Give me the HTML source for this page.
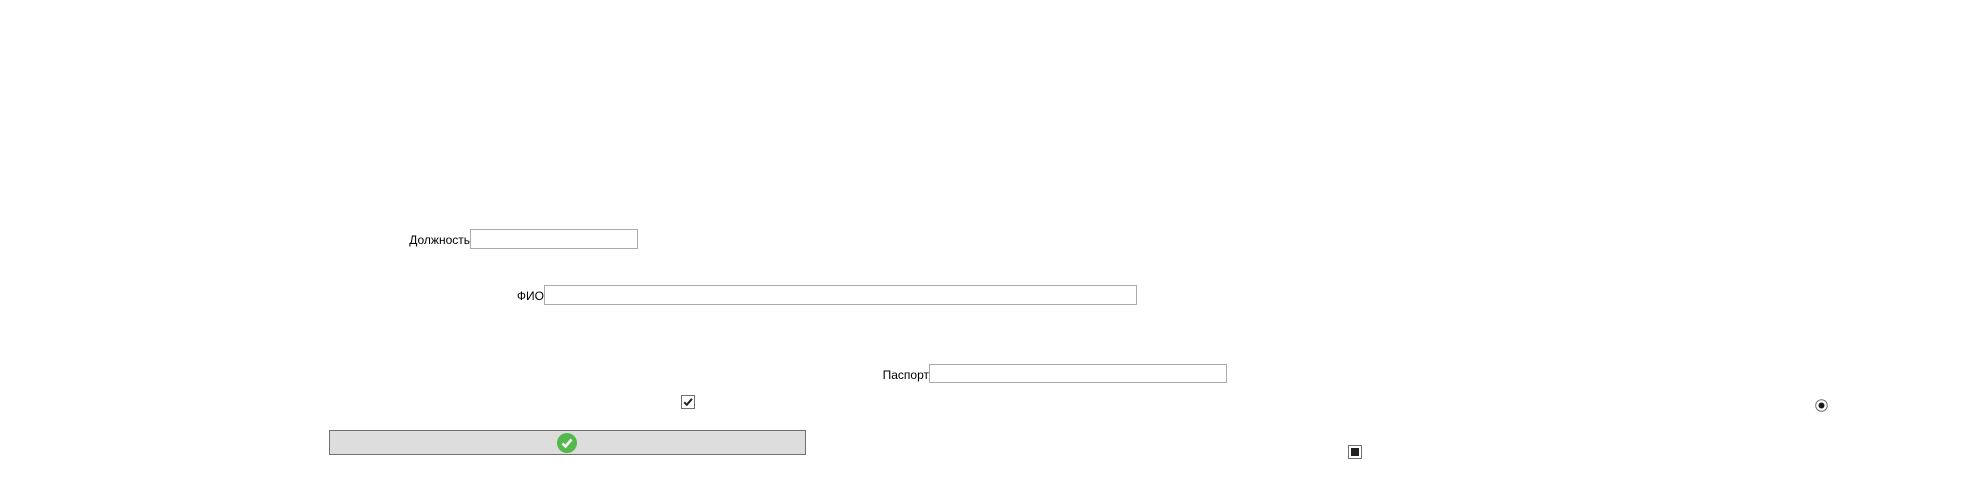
<!DOCTYPE html>
<html><head><meta charset="utf-8"><style>
html,body{margin:0;padding:0;background:#fff;width:1981px;height:491px;overflow:hidden;position:relative;font-family:"Liberation Sans","DejaVu Sans",sans-serif;font-size:12px;color:#000}
.a{position:absolute}
.lbl{position:absolute;text-align:right;line-height:14px;white-space:nowrap}
.inp{position:absolute;box-sizing:border-box;border:1px solid #ababab;background:#fff}
</style></head><body>
<div class="lbl" style="right:1511px;top:233px">Должность</div>
<div class="inp" style="left:470px;top:229px;width:168px;height:20px"></div>
<div class="lbl" style="right:1437px;top:289px">ФИО</div>
<div class="inp" style="left:544px;top:285px;width:593px;height:20px"></div>
<div class="lbl" style="right:1052px;top:368px">Паспорт</div>
<div class="inp" style="left:929px;top:364px;width:298px;height:19px"></div>
<svg class="a" style="left:681px;top:395px" width="14" height="14" viewBox="0 0 14 14">
<rect x="0.5" y="0.5" width="13" height="13" fill="#fff" stroke="#707070"/>
<path d="M3.2 7.2 L5.8 9.8 L11 3.8" fill="none" stroke="#222" stroke-width="2"/>
</svg>
<div class="a" style="left:329px;top:430px;width:477px;height:25px;box-sizing:border-box;border:1px solid #707070;background:#dddddd"></div>
<svg class="a" style="left:557px;top:433px" width="20" height="20" viewBox="0 0 20 20">
<circle cx="10" cy="10" r="10" fill="#52b94a"/>
<path d="M5.5 10.5 L8.5 13.5 L14.5 6.5" fill="none" stroke="#fff" stroke-width="2.6"/>
</svg>
<svg class="a" style="left:1815px;top:399px" width="13" height="13" viewBox="0 0 13 13">
<circle cx="6.5" cy="6.5" r="5.8" fill="#fff" stroke="#707070" stroke-width="1"/>
<circle cx="6.5" cy="6.5" r="3" fill="#1a1a1a"/>
</svg>
<svg class="a" style="left:1348px;top:445px" width="14" height="14" viewBox="0 0 14 14">
<rect x="0.5" y="0.5" width="13" height="13" fill="#fff" stroke="#707070"/>
<rect x="3" y="3" width="8" height="8" fill="#222"/>
</svg>
</body></html>
